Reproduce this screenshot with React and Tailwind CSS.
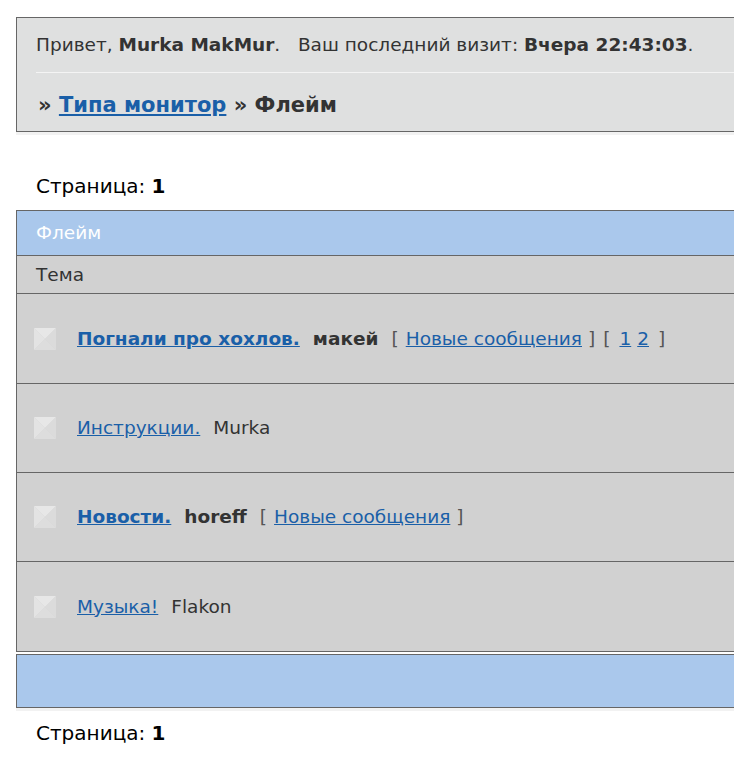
import React from "react";

const font = { fontFamily: '"DejaVu Sans", Verdana, sans-serif' };

function Check() {
  return (
    <svg width="22" height="22" viewBox="0 0 22 22" className="shrink-0">
      <polygon points="0,0 22,0 11,11" fill="#e7e7e7" />
      <polygon points="0,0 0,22 11,11" fill="#e3e3e3" />
      <polygon points="22,0 22,22 11,11" fill="#dbdbdb" />
      <polygon points="0,22 22,22 11,11" fill="#dddddd" />
    </svg>
  );
}

function Row({ children, last, first }) {
  return (
    <div className={"flex items-center pl-[17px] border-[#666] " + (first ? "h-[90px] " : "h-[89px] ") + (last ? "" : "border-b")}>
      <Check />
      <div className="ml-[21px] flex items-baseline whitespace-nowrap text-[#333]">{children}</div>
    </div>
  );
}

const A = ({ children, bold }) => (
  <a href="#" className={"text-[#1a5fa8] underline " + (bold ? "font-bold" : "")}>{children}</a>
);

export default function App() {
  return (
    <div className="w-[734px] h-[757px] overflow-hidden bg-white text-[18.5px] leading-[1.3]" style={font}>
      <div className="pt-[17px] pl-[16px] w-[900px]">
        <div className="border border-[#666] bg-[#dfe0e0] pl-[19px]">
          <div className="pt-[15px] pb-[15px] text-[#333] whitespace-nowrap">
            Привет, <b>Murka MakMur</b>.&nbsp;&nbsp; Ваш последний визит: <b>Вчера 22:43:03</b>.
          </div>
          <div className="border-t border-[#f4f4f4]"></div>
          <div className="pt-[19px] pb-[13px] text-[21px] leading-[26px] font-bold text-[#333] pl-[2px] whitespace-nowrap">
            » <A bold>Типа монитор</A> » Флейм
          </div>
        </div>
        <div className="h-[3px] bg-[#f2f2f2]"></div>

        <div className="pl-[20px] pt-[38px] pb-[11px] text-[20px] text-black">
          Страница: <b>1</b>
        </div>

        <div className="border border-[#666]">
          <div className="h-[45px] bg-[#aac8ec] text-white flex items-center pl-[19px] border-b border-[#666]">Флейм</div>
          <div className="h-[38px] bg-[#d1d1d1] text-[#333] flex items-center pl-[19px] border-b border-[#666]">Тема</div>
          <div className="bg-[#d1d1d1]">
            <Row first>
              <A bold>Погнали про хохлов.</A>
              <b className="ml-[13px]">макей</b>
              <span className="ml-[13px] text-[#555]">[</span>
              <span className="ml-[7px]"><A>Новые сообщения</A></span>
              <span className="ml-[6px] text-[#555]">]</span>
              <span className="ml-[8px] text-[#555]">[</span>
              <span className="ml-[9px]"><A>1</A></span>
              <span className="ml-[6px]"><A>2</A></span>
              <span className="ml-[9px] text-[#555]">]</span>
            </Row>
            <Row>
              <A>Инструкции.</A>
              <span className="ml-[13px]">Murka</span>
            </Row>
            <Row>
              <A bold>Новости.</A>
              <b className="ml-[13px]">horeff</b>
              <span className="ml-[13px] text-[#555]">[</span>
              <span className="ml-[7px]"><A>Новые сообщения</A></span>
              <span className="ml-[6px] text-[#555]">]</span>
            </Row>
            <Row last>
              <A>Музыка!</A>
              <span className="ml-[13px]">Flakon</span>
            </Row>
          </div>
        </div>

        <div className="mt-[2px] border border-[#666] bg-[#aac8ec] h-[54px]"></div>
        <div className="h-[3px] bg-[#f2f2f2]"></div>

        <div className="pl-[20px] pt-[9px] text-[20px] text-black">
          Страница: <b>1</b>
        </div>
      </div>
    </div>
  );
}
